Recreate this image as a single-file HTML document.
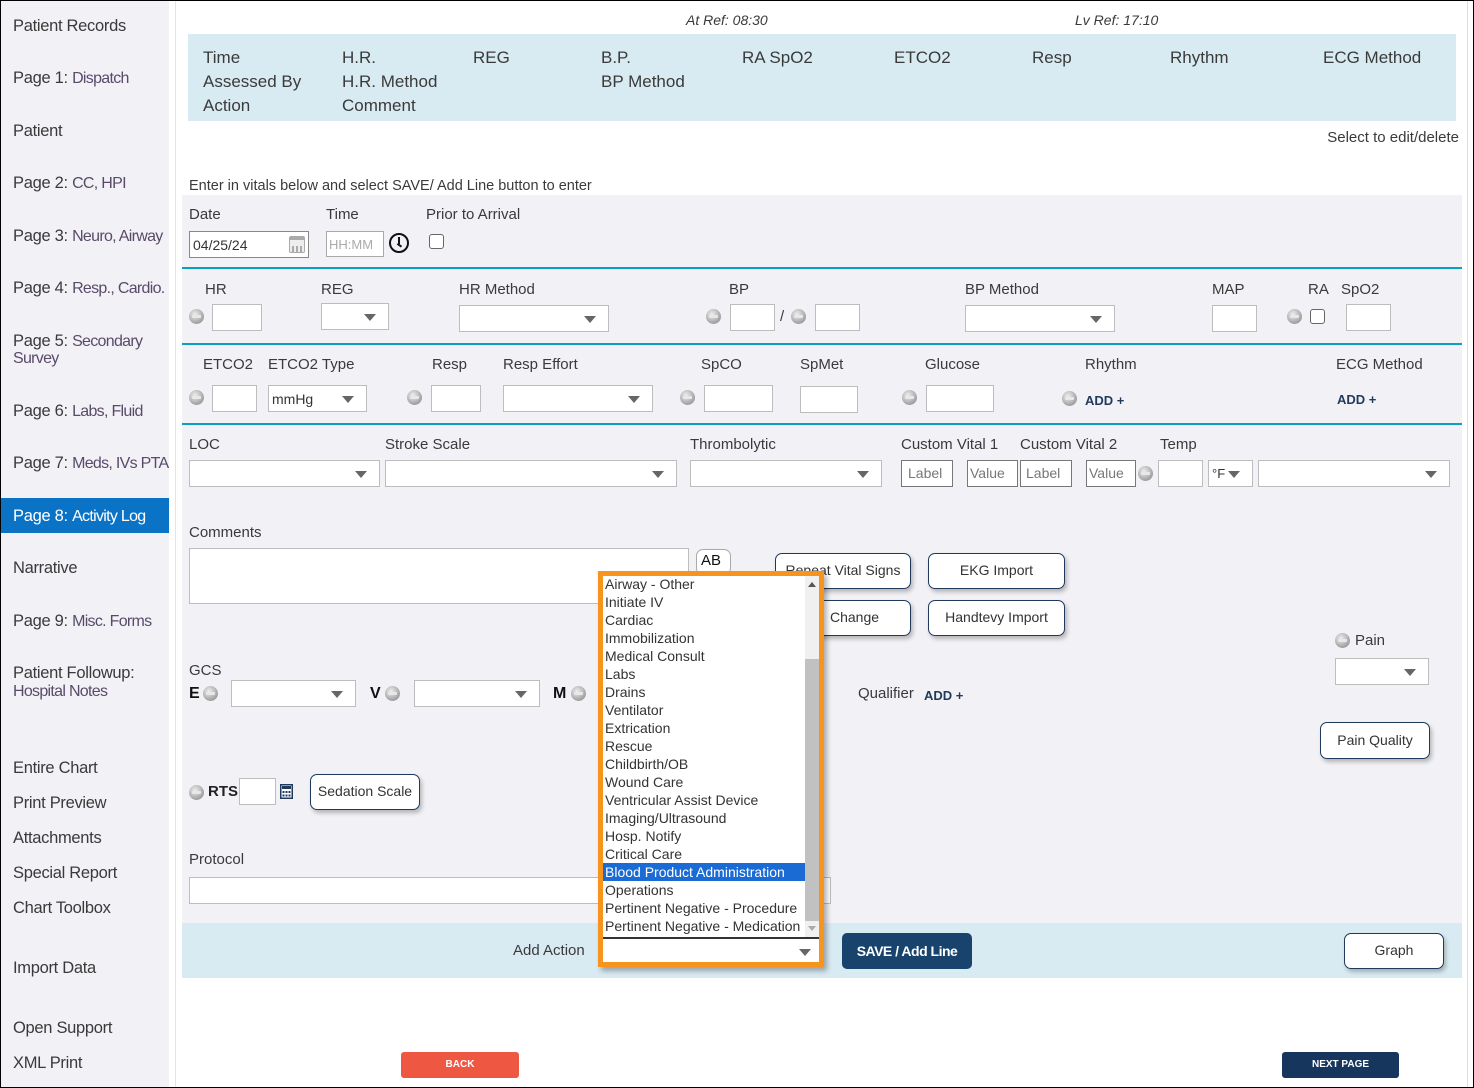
<!DOCTYPE html>
<html><head><meta charset="utf-8">
<style>
*{box-sizing:border-box;margin:0;padding:0}
body{width:1474px;height:1088px;position:relative;overflow:hidden;background:#fff;font-family:"Liberation Sans",Arial,sans-serif;color:#333;}
.a{position:absolute}
.t{position:absolute;font-size:15px;line-height:18px;color:#3a3a3a;white-space:nowrap}
.in{position:absolute;background:#fff;border:1px solid #bdbdbd;height:27px}
.sel{position:absolute;background:#fff;border:1px solid #bdbdbd;height:27px}
.sel::after{content:"";position:absolute;right:12px;top:10px;border-left:6px solid transparent;border-right:6px solid transparent;border-top:7px solid #666}
.m{position:absolute;width:15px;height:15px;border-radius:50%;background:radial-gradient(circle at 40% 35%,#eee,#9a9a9a 75%,#777);}
.m::after{content:"";position:absolute;left:3px;right:3px;top:6px;height:3px;background:#e8e8e8;border-radius:1px}
.btn{position:absolute;background:#fff;border:1.5px solid #1f3a5c;border-radius:7px;box-shadow:2px 3px 4px rgba(0,0,0,.25);font-size:14px;color:#333;text-align:center;white-space:nowrap}
.nav{position:absolute;left:13px;font-size:16.5px;color:#3a3a3a;line-height:18px;white-space:nowrap;letter-spacing:-0.3px}
.nav span{color:#5a4a6a;font-size:16px;letter-spacing:-0.7px}
.hl{position:absolute;height:2px;background:#0aa0c0;left:182px;width:1280px}
.li{font-size:14px;line-height:18px;height:18px;padding-left:2px;color:#333;white-space:nowrap}
.add{position:absolute;font-size:13px;font-weight:bold;color:#1f3a5c}
</style></head><body>
<div class="a" style="left:0;top:0;width:1474px;height:1088px;border:1px solid #000;z-index:50;pointer-events:none"></div>
<div class="a" style="left:0;top:0;width:169px;height:1088px;background:#f2f2f6"></div>
<div class="a" style="left:175px;top:0;width:1px;height:1088px;background:#e4e4e4"></div>
<div class="a" style="left:1467px;top:0;width:1px;height:1088px;background:#ddd"></div>
<div class="a" style="left:0;top:498px;width:169px;height:35px;background:#0b73c6"></div>
<div class="nav" style="top:17px">Patient Records</div>
<div class="nav" style="top:69px">Page 1: <span>Dispatch</span></div>
<div class="nav" style="top:122px">Patient</div>
<div class="nav" style="top:174px">Page 2: <span>CC, HPI</span></div>
<div class="nav" style="top:227px">Page 3: <span>Neuro, Airway</span></div>
<div class="nav" style="top:279px">Page 4: <span>Resp., Cardio.</span></div>
<div class="nav" style="top:332px">Page 5: <span>Secondary</span></div>
<div class="nav" style="top:349px"><span>Survey</span></div>
<div class="nav" style="top:402px">Page 6: <span>Labs, Fluid</span></div>
<div class="nav" style="top:454px">Page 7: <span>Meds, IVs PTA</span></div>
<div class="nav" style="top:507px;color:#fff">Page 8: <span style="color:#fff">Activity Log</span></div>
<div class="nav" style="top:559px">Narrative</div>
<div class="nav" style="top:612px">Page 9: <span>Misc. Forms</span></div>
<div class="nav" style="top:664px">Patient Followup:</div>
<div class="nav" style="top:682px"><span>Hospital Notes</span></div>
<div class="nav" style="top:759px">Entire Chart</div>
<div class="nav" style="top:794px">Print Preview</div>
<div class="nav" style="top:829px">Attachments</div>
<div class="nav" style="top:864px">Special Report</div>
<div class="nav" style="top:899px">Chart Toolbox</div>
<div class="nav" style="top:959px">Import Data</div>
<div class="nav" style="top:1019px">Open Support</div>
<div class="nav" style="top:1054px">XML Print</div>

<div class="t" style="left:686px;top:11px;font-style:italic;font-size:14px">At Ref: 08:30</div>
<div class="t" style="left:1075px;top:11px;font-style:italic;font-size:14px">Lv Ref: 17:10</div>
<div class="a" style="left:188px;top:34px;width:1268px;height:87px;background:#d9ebf2"></div>
<div class="t" style="left:203px;top:46px;font-size:17px;line-height:24px">Time<br>Assessed By<br>Action</div>
<div class="t" style="left:342px;top:46px;font-size:17px;line-height:24px">H.R.<br>H.R. Method<br>Comment</div>
<div class="t" style="left:473px;top:46px;font-size:17px;line-height:24px">REG</div>
<div class="t" style="left:601px;top:46px;font-size:17px;line-height:24px">B.P.<br>BP Method</div>
<div class="t" style="left:742px;top:46px;font-size:17px;line-height:24px">RA SpO2</div>
<div class="t" style="left:894px;top:46px;font-size:17px;line-height:24px">ETCO2</div>
<div class="t" style="left:1032px;top:46px;font-size:17px;line-height:24px">Resp</div>
<div class="t" style="left:1170px;top:46px;font-size:17px;line-height:24px">Rhythm</div>
<div class="t" style="left:1323px;top:46px;font-size:17px;line-height:24px">ECG Method</div>
<div class="t" style="right:15px;top:129px">Select to edit/delete</div>
<div class="t" style="left:189px;top:177px;font-size:14.5px">Enter in vitals below and select SAVE/ Add Line button to enter</div>

<div class="a" style="left:182px;top:195px;width:1280px;height:728px;background:#f2f2f6"></div>
<div class="hl" style="top:267px"></div>
<div class="hl" style="top:343px"></div>
<div class="hl" style="top:423px"></div>

<div class="t" style="left:189px;top:206px">Date</div>
<div class="t" style="left:326px;top:206px">Time</div>
<div class="t" style="left:426px;top:206px">Prior to Arrival</div>
<div class="in" style="left:189px;top:231px;width:120px;height:27px;border-color:#888;font-size:14px;padding:5px 3px">04/25/24</div>
<div class="a" style="left:289px;top:236px;width:16px;height:17px;border:1.5px solid #aaa;border-top-width:4px;border-radius:2px;background:repeating-linear-gradient(90deg,#aaa 0 2px,transparent 2px 4px) 2px 6px/10px 6px no-repeat #eee"></div>
<div class="in" style="left:326px;top:231px;width:58px;height:26px;border-color:#aaa;font-size:13px;color:#aaa;padding:5px 2px">HH:MM</div>
<div class="a" style="left:389px;top:233px;width:20px;height:20px;border:2.5px solid #111;border-radius:50%"></div>
<div class="a" style="left:398px;top:237px;width:2px;height:7px;background:#111"></div>
<div class="a" style="left:398px;top:243px;width:5px;height:2px;background:#111;transform:rotate(35deg);transform-origin:0 0"></div>
<div class="a" style="left:429px;top:234px;width:15px;height:15px;border:1.5px solid #666;border-radius:3px;background:#fff"></div>

<div class="t" style="left:205px;top:281px">HR</div>
<div class="t" style="left:321px;top:281px">REG</div>
<div class="t" style="left:459px;top:281px">HR Method</div>
<div class="t" style="left:729px;top:281px">BP</div>
<div class="t" style="left:965px;top:281px">BP Method</div>
<div class="t" style="left:1212px;top:281px">MAP</div>
<div class="t" style="left:1308px;top:281px">RA</div>
<div class="t" style="left:1341px;top:281px">SpO2</div>
<div class="m" style="left:189px;top:309px"></div>
<div class="in" style="left:212px;top:304px;width:50px"></div>
<div class="sel" style="left:321px;top:303px;width:68px"></div>
<div class="sel" style="left:459px;top:305px;width:150px"></div>
<div class="m" style="left:706px;top:309px"></div>
<div class="in" style="left:730px;top:304px;width:45px"></div>
<div class="t" style="left:780px;top:308px">/</div>
<div class="m" style="left:791px;top:309px"></div>
<div class="in" style="left:815px;top:304px;width:45px"></div>
<div class="sel" style="left:965px;top:305px;width:150px"></div>
<div class="in" style="left:1212px;top:305px;width:45px"></div>
<div class="m" style="left:1287px;top:309px"></div>
<div class="a" style="left:1310px;top:309px;width:15px;height:15px;border:1.5px solid #666;border-radius:3px;background:#fff"></div>
<div class="in" style="left:1346px;top:304px;width:45px"></div>

<div class="t" style="left:203px;top:356px">ETCO2</div>
<div class="t" style="left:268px;top:356px">ETCO2 Type</div>
<div class="t" style="left:432px;top:356px">Resp</div>
<div class="t" style="left:503px;top:356px">Resp Effort</div>
<div class="t" style="left:701px;top:356px">SpCO</div>
<div class="t" style="left:800px;top:356px">SpMet</div>
<div class="t" style="left:925px;top:356px">Glucose</div>
<div class="t" style="left:1085px;top:356px">Rhythm</div>
<div class="t" style="left:1336px;top:356px">ECG Method</div>
<div class="m" style="left:189px;top:390px"></div>
<div class="in" style="left:212px;top:385px;width:45px"></div>
<div class="sel" style="left:268px;top:385px;width:99px;font-size:14px;padding:5px 3px">mmHg</div>
<div class="m" style="left:407px;top:390px"></div>
<div class="in" style="left:431px;top:385px;width:50px"></div>
<div class="sel" style="left:503px;top:385px;width:150px"></div>
<div class="m" style="left:680px;top:390px"></div>
<div class="in" style="left:704px;top:385px;width:69px"></div>
<div class="in" style="left:800px;top:386px;width:58px"></div>
<div class="m" style="left:902px;top:390px"></div>
<div class="in" style="left:926px;top:385px;width:68px"></div>
<div class="m" style="left:1062px;top:391px"></div>
<div class="add" style="left:1085px;top:393px">ADD +</div>
<div class="add" style="left:1337px;top:392px">ADD +</div>

<div class="t" style="left:189px;top:436px">LOC</div>
<div class="t" style="left:385px;top:436px">Stroke Scale</div>
<div class="t" style="left:690px;top:436px">Thrombolytic</div>
<div class="t" style="left:901px;top:436px">Custom Vital 1</div>
<div class="t" style="left:1020px;top:436px">Custom Vital 2</div>
<div class="t" style="left:1160px;top:436px">Temp</div>
<div class="sel" style="left:189px;top:460px;width:191px"></div>
<div class="sel" style="left:385px;top:460px;width:292px"></div>
<div class="sel" style="left:690px;top:460px;width:192px"></div>
<div class="in" style="left:901px;top:460px;width:52px;border-color:#777;font-size:14px;color:#777;padding:4px 6px">Label</div>
<div class="in" style="left:967px;top:460px;width:51px;border-color:#777;font-size:14px;color:#777;padding:4px 2px">Value</div>
<div class="in" style="left:1020px;top:460px;width:52px;border-color:#777;font-size:14px;color:#777;padding:4px 5px">Label</div>
<div class="in" style="left:1086px;top:460px;width:50px;border-color:#777;font-size:14px;color:#777;padding:4px 2px">Value</div>
<div class="m" style="left:1138px;top:466px"></div>
<div class="in" style="left:1158px;top:460px;width:45px"></div>
<div class="sel" style="left:1208px;top:460px;width:45px;font-size:13px;padding:5px 3px">°F</div>
<div class="sel" style="left:1258px;top:460px;width:192px"></div>

<div class="t" style="left:189px;top:524px">Comments</div>
<div class="in" style="left:189px;top:548px;width:500px;height:56px"></div>
<div class="a" style="left:696px;top:549px;width:35px;height:26px;border:1px solid #aaa;border-radius:7px;background:#fff;font-size:15px;padding:2px 4px;color:#111">AB</div>

<div class="btn" style="left:775px;top:553px;width:136px;height:36px;line-height:33px">Repeat Vital Signs</div>
<div class="btn" style="left:928px;top:553px;width:137px;height:36px;line-height:33px">EKG Import</div>
<div class="btn" style="left:775px;top:600px;width:136px;height:36px;line-height:33px;text-align:left;padding-left:54px">Change</div>
<div class="btn" style="left:928px;top:600px;width:137px;height:36px;line-height:33px">Handtevy Import</div>

<div class="m" style="left:1335px;top:633px"></div>
<div class="t" style="left:1355px;top:632px">Pain</div>
<div class="sel" style="left:1335px;top:658px;width:94px"></div>
<div class="btn" style="left:1320px;top:722px;width:110px;height:37px;line-height:34px">Pain Quality</div>

<div class="t" style="left:858px;top:685px">Qualifier</div>
<div class="add" style="left:924px;top:688px">ADD +</div>

<div class="t" style="left:189px;top:662px">GCS</div>
<div class="t" style="left:189px;top:685px;font-weight:bold;font-size:16px;color:#111">E</div>
<div class="m" style="left:203px;top:686px"></div>
<div class="sel" style="left:231px;top:680px;width:125px"></div>
<div class="t" style="left:370px;top:685px;font-weight:bold;font-size:16px;color:#111">V</div>
<div class="m" style="left:385px;top:686px"></div>
<div class="sel" style="left:414px;top:680px;width:126px"></div>
<div class="t" style="left:553px;top:685px;font-weight:bold;font-size:16px;color:#111">M</div>
<div class="m" style="left:571px;top:686px"></div>

<div class="m" style="left:189px;top:785px"></div>
<div class="t" style="left:208px;top:783px;font-weight:bold;color:#222">RTS</div>
<div class="in" style="left:239px;top:778px;width:37px"></div>
<svg class="a" style="left:280px;top:784px" width="13" height="15" viewBox="0 0 13 15"><rect x="0.75" y="0.75" width="11.5" height="13.5" fill="#fff" stroke="#1f3a5c" stroke-width="1.5"/><rect x="2" y="2" width="9" height="3" fill="#1f3a5c"/><g fill="#1f3a5c"><rect x="2.5" y="7" width="2" height="2"/><rect x="5.5" y="7" width="2" height="2"/><rect x="8.5" y="7" width="2" height="2"/><rect x="2.5" y="10.5" width="2" height="2"/><rect x="5.5" y="10.5" width="2" height="2"/><rect x="8.5" y="10.5" width="2" height="2"/></g></svg>
<div class="btn" style="left:310px;top:774px;width:110px;height:36px;line-height:33px">Sedation Scale</div>

<div class="t" style="left:189px;top:851px">Protocol</div>
<div class="in" style="left:189px;top:877px;width:642px;height:27px"></div>

<div class="a" style="left:182px;top:923px;width:1280px;height:55px;background:#d9ebf2"></div>
<div class="t" style="left:513px;top:942px">Add Action</div>
<div class="a" style="left:842px;top:933px;width:130px;height:36px;background:#17436c;border-radius:5px;color:#fff;font-weight:bold;font-size:14px;text-align:center;line-height:36px;letter-spacing:-0.5px">SAVE / Add Line</div>
<div class="btn" style="left:1344px;top:933px;width:100px;height:36px;line-height:33px">Graph</div>

<div class="a" style="left:401px;top:1052px;width:118px;height:26px;background:#ee5843;border-radius:3px;color:#fff;font-size:10px;font-weight:bold;text-align:center;line-height:26px">BACK</div>
<div class="a" style="left:1282px;top:1052px;width:117px;height:26px;background:#17365d;border-radius:3px;color:#fff;font-size:10px;font-weight:bold;text-align:center;line-height:26px">NEXT PAGE</div>

<div class="a" style="left:598px;top:571px;width:226px;height:396px;border:5px solid #f7941d;background:#fff;box-shadow:3px 4px 5px rgba(0,0,0,.3);z-index:10">
 <div class="a" style="left:0;top:-1px;width:202px;height:361px;overflow:hidden">
  <div class="li">Airway - Other</div><div class="li">Initiate IV</div><div class="li">Cardiac</div><div class="li">Immobilization</div><div class="li">Medical Consult</div><div class="li">Labs</div><div class="li">Drains</div><div class="li">Ventilator</div><div class="li">Extrication</div><div class="li">Rescue</div><div class="li">Childbirth/OB</div><div class="li">Wound Care</div><div class="li">Ventricular Assist Device</div><div class="li">Imaging/Ultrasound</div><div class="li">Hosp. Notify</div><div class="li">Critical Care</div>
  <div class="li" style="background:#1a6bd4;color:#fff">Blood Product Administration</div>
  <div class="li">Operations</div><div class="li">Pertinent Negative - Procedure</div><div class="li">Pertinent Negative - Medication</div>
 </div>
 <div class="a" style="left:202px;top:0;width:14px;height:361px;background:#f0f0f0"></div>
 <div class="a" style="left:202px;top:83px;width:14px;height:262px;background:#c1c1c1"></div>
 <div class="a" style="left:205px;top:6px;border-left:4px solid transparent;border-right:4px solid transparent;border-bottom:5px solid #555"></div>
 <div class="a" style="left:205px;top:350px;border-left:4px solid transparent;border-right:4px solid transparent;border-top:5px solid #aaa"></div>
 <div class="a" style="left:0;top:361px;width:216px;height:2px;background:#333"></div>
 <div class="a" style="left:196px;top:373px;border-left:6px solid transparent;border-right:6px solid transparent;border-top:7px solid #666"></div>
</div>
</body></html>
